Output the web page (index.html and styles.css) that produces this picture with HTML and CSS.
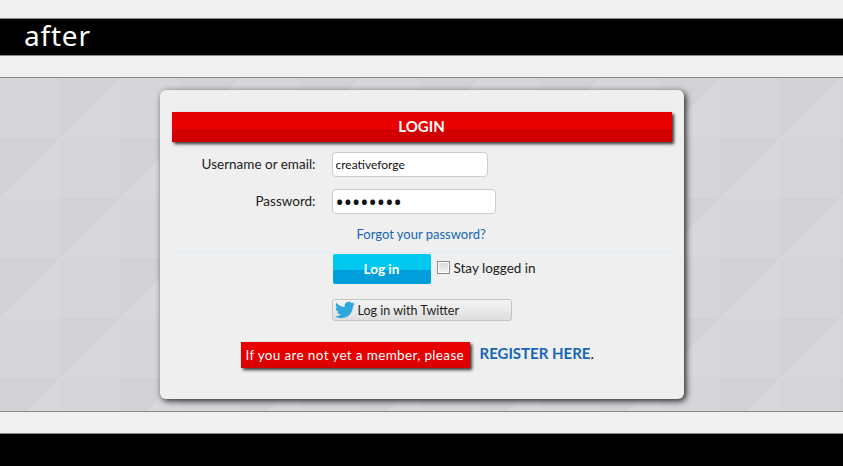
FILE: index.html
```html
<!DOCTYPE html>
<html lang="en">
<head>
    <meta charset="UTF-8">
    <meta name="viewport" content="width=device-width, initial-scale=1.0">
    <title>Login</title>
    <link rel="stylesheet" href="styles.css">
</head>
<body>
    <header class="site-header">
        <div class="logo">after</div>
    </header>

    <main class="content">
        <div class="login-box">
            <h1 class="login-title">LOGIN</h1>
            <form class="login-form">
                <div class="input-group">
                    <label for="username">Username or email:</label>
                    <input type="text" id="username" class="input-user" value="creativeforge">
                </div>
                <div class="input-group">
                    <label for="password">Password:</label>
                    <input type="password" id="password" class="input-pass" value="12345678">
                </div>
                <div class="forgot-link"><a href="#">Forgot your password?</a></div>
                <div class="form-actions">
                    <button type="submit" class="login-btn">Log in</button>
                    <label class="stay-logged"><input type="checkbox"> Stay logged in</label>
                </div>
                <a href="#" class="twitter-btn">
                    <svg class="twitter-bird" viewBox="0 0 24 24" width="20" height="20">
                        <path d="M23.953 4.57a10 10 0 01-2.825.775 4.958 4.958 0 002.163-2.723c-.951.555-2.005.959-3.127 1.184a4.92 4.92 0 00-8.384 4.482C7.69 8.095 4.067 6.13 1.64 3.162a4.822 4.822 0 00-.666 2.475c0 1.71.87 3.213 2.188 4.096a4.904 4.904 0 01-2.228-.616v.06a4.923 4.923 0 003.946 4.827 4.996 4.996 0 01-2.212.085 4.936 4.936 0 004.604 3.417 9.867 9.867 0 01-6.102 2.105c-.39 0-.779-.023-1.17-.067a13.995 13.995 0 007.557 2.209c9.053 0 13.998-7.496 13.998-13.985 0-.21 0-.42-.015-.63A9.935 9.935 0 0024 4.59z"/>
                    </svg>
                    Log in with Twitter
                </a>
            </form>
            <div class="register-row">
                <span class="register-note">If you are not yet a member, please</span>
                <span class="register-link"><a href="#">REGISTER HERE</a>.</span>
            </div>
        </div>
    </main>

    <footer class="site-footer"></footer>
</body>
</html>
```

FILE: styles.css
```css
* {
    margin: 0;
    padding: 0;
    box-sizing: border-box;
    font-family: 'Lato', 'Noto Sans', sans-serif;
}

html, body {
    height: 466px;
    overflow: hidden;
}

body {
    background: #f0f0f0;
    color: #222;
    font-size: 13.5px;
    padding-top: 18px;
}

.site-header {
    height: 38px;
    background: #000;
    border-top: 1px solid #888;
    border-bottom: 1px solid #888;
    padding-left: 24px;
}

.logo {
    color: #fff;
    font-family: 'Noto Sans', sans-serif;
    font-size: 28px;
    line-height: 33px;
    letter-spacing: 0.8px;
}

.content {
    height: 335px;
    margin-top: 21px;
    padding-top: 12px;
    border-top: 1px solid #888;
    border-bottom: 1px solid #888;
    background-color: #d8d8dc;
    background-image:
        linear-gradient(135deg, #d1d1d6 25%, transparent 25%),
        linear-gradient(135deg, #d1d1d6 25%, transparent 25%),
        conic-gradient(#d5d5da 25%, transparent 0 50%, #d5d5da 0 75%, transparent 0);
    background-size: 120px 120px;
    background-position: 60px 0, 0 60px, 60px 0;
}

.login-box {
    width: 524px;
    height: 309px;
    margin: 0 auto;
    padding: 22px 12px 0;
    background: #efefef;
    border-radius: 6px;
    box-shadow: 2px 2px 6px #222;
}

.login-title {
    height: 30px;
    margin-bottom: 10px;
    background: linear-gradient(#e00000, #ee0000 55%, #d20000 55%, #d00000);
    box-shadow: 2px 2px 3px #333;
    color: #fff;
    font-size: 15px;
    line-height: 28px;
    text-align: center;
}

.input-group {
    display: flex;
    align-items: center;
    gap: 16px;
    margin-bottom: 12px;
}

.input-group label {
    width: 144px;
    padding-bottom: 2px;
    text-align: right;
}

.input-group input {
    height: 25px;
    padding: 0 3px;
    background: #fff;
    border: 1px solid #ccc;
    border-radius: 4px;
    color: #111;
    font-size: 12px;
}

.input-user {
    width: 156px;
}

.input-group .input-pass {
    width: 164px;
    padding-bottom: 2px;
    font-family: 'Noto Sans', sans-serif;
    font-size: 22px;
}

.forgot-link {
    height: 26px;
    margin-left: 185px;
    font-size: 13px;
    line-height: 16px;
}

a {
    color: #1565b8;
    text-decoration: none;
}

.form-actions {
    display: flex;
    align-items: center;
    padding-left: 161px;
    border-top: 1px solid #dcebf5;
    padding-top: 1px;
}

.login-btn {
    width: 98px;
    height: 30px;
    background: linear-gradient(#00c8ee 53%, #009fdc 53%);
    border: 0;
    border-radius: 2px;
    color: #fff;
    font-size: 13.5px;
    font-weight: bold;
}

.stay-logged {
    display: flex;
    align-items: center;
    gap: 4px;
    margin-left: 6px;
    margin-top: -2px;
}

.stay-logged input {
    appearance: none;
    width: 13px;
    height: 13px;
    margin-top: -2px;
    background: linear-gradient(#d8d8d8, #f4f4f4);
    border: 1px solid #8a8a8a;
    box-shadow: inset 0 0 0 1px #fff;
}

.twitter-btn {
    display: flex;
    align-items: center;
    gap: 3px;
    width: 180px;
    height: 22px;
    margin: 15px 0 0 160px;
    padding-left: 2px;
    background: linear-gradient(#f4f4f4, #dedede);
    border: 1px solid #c4c4c4;
    border-radius: 3px;
    color: #222;
    font-size: 12.5px;
}

.twitter-bird {
    fill: #2ea7dc;
}

.register-row {
    display: flex;
    align-items: center;
    gap: 10px;
    margin: 21px 0 0 69px;
}

.register-note {
    width: 229px;
    height: 26px;
    padding-left: 5px;
    background: linear-gradient(#e60000 60%, #d40000);
    box-shadow: 2px 2px 3px #333;
    color: #fff;
    letter-spacing: 0.35px;
    line-height: 26px;
}

.register-link {
    margin-top: -4px;
    font-size: 15px;
}

.register-link a {
    font-weight: bold;
}

.site-footer {
    height: 40px;
    margin-top: 21px;
    background: #000;
    border-top: 1px solid #888;
}
```
